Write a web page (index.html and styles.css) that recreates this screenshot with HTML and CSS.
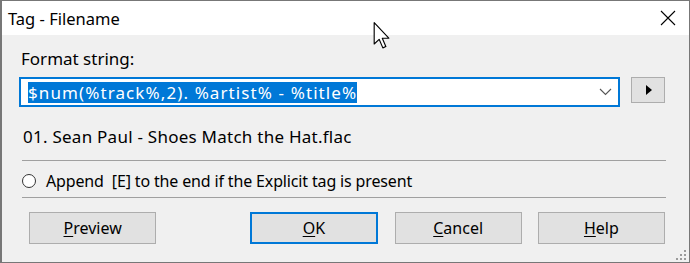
FILE: index.html
```html
<!DOCTYPE html>
<html>
<head>
<meta name="viewport" content="width=device-width, initial-scale=1">
<title>Tag - Filename</title>
<link rel="stylesheet" href="styles.css">
</head>
<body>

<div class="window">
  <div class="titlebar">
    <span class="title">Tag - Filename</span>
    <svg class="close" width="16" height="16" viewBox="0 0 16 16">
      <path d="M1 1 L15 15 M15 1 L1 15" stroke="#000" stroke-width="1.1" fill="none"/>
    </svg>
  </div>

  <div class="content">
    <div class="label">Format string:</div>

    <div class="combo-row">
      <div class="combo">
        <span class="selected">$num(%track%,2). %artist% - %title%</span>
        <svg class="chevron" width="13" height="8" viewBox="0 0 13 8">
          <path d="M1 1 L6.5 6.5 L12 1" stroke="#555" stroke-width="1.1" fill="none"/>
        </svg>
      </div>
      <button class="play">
        <svg width="8" height="10" viewBox="0 0 8 10"><path d="M1 0 L7 5 L1 10 Z" fill="#000"/></svg>
      </button>
    </div>

    <div class="preview">01. Sean Paul - Shoes Match the Hat.flac</div>

    <div class="sep"></div>

    <label class="radio-row">
      <span class="radio"></span>
      <span class="radio-text">Append  [E] to the end if the Explicit tag is present</span>
    </label>

    <div class="sep sep-low"></div>

    <div class="buttons">
      <button class="btn preview-btn"><u>P</u>review</button>
      <button class="btn default"><u>O</u>K</button>
      <button class="btn"><u>C</u>ancel</button>
      <button class="btn"><u>H</u>elp</button>
    </div>
  </div>

  <!-- resize grip -->
  <svg class="grip" width="10" height="10" viewBox="0 0 10 10" fill="#9a9a9a">
    <rect x="8" y="0" width="2" height="2"/>
    <rect x="4" y="4" width="2" height="2"/><rect x="8" y="4" width="2" height="2"/>
    <rect x="0" y="8" width="2" height="2"/><rect x="4" y="8" width="2" height="2"/><rect x="8" y="8" width="2" height="2"/>
  </svg>

  <!-- mouse pointer -->
  <svg class="cursor" width="18" height="27" viewBox="0 0 12 19">
    <path d="M0.5 0.5 L0.5 15.5 L4 12.2 L6.6 18.2 L8.7 17.3 L6.2 11.4 L10.8 11.4 Z" fill="#fff" stroke="#000" stroke-width="0.8" stroke-linejoin="round"/>
  </svg>
</div>

</body>
</html>
```

FILE: styles.css
```css
* {box-sizing: border-box}
body {
  margin: 0;
  font-family: "Noto Sans", "Open Sans", sans-serif;
  color: #000;
}
.window {
  position: relative;
  width: 690px;
  height: 263px;
  border: 1px solid #777;
  border-left-width: 2px;
  background-color: #f0f0f0;
  display: flex;
  flex-direction: column;
}
.titlebar {
  height: 34px;
  background-color: #fff;
  display: flex;
  align-items: center;
  padding: 0 13px 0 6px;
}
.title {
  font-size: 16.5px;
}
.close {
  margin-left: auto;
}
.content {
  padding: 0 24px 0 17px;
  display: flex;
  flex-direction: column;
  font-size: 17px;
}
.label {
  margin-top: 12px;
  height: 24px;
  line-height: 24px;
  padding-left: 2px;
}
.combo-row {
  margin-top: 6px;
  display: flex;
  align-items: flex-start;
}
.combo {
  width: 606px;
  height: 30px;
  border: 2px solid #0078d7;
  background-color: #fff;
  display: flex;
  align-items: center;
  padding-left: 7px;
}
.selected {
  background-color: #0078d7;
  color: #fff;
  height: 21px;
  line-height: 21px;
  white-space: pre;
  letter-spacing: 1.1px;
}
.chevron {
  margin-left: auto;
  margin-right: 6px;
}
.play {
  margin-left: 11px;
  width: 34px;
  height: 26px;
  border: 1px solid #adadad;
  background-color: #e1e1e1;
  display: flex;
  align-items: center;
  justify-content: center;
  padding: 0 0 0 1px;
}
.preview {
  margin-top: 18px;
  height: 24px;
  line-height: 24px;
  padding-left: 4px;
  letter-spacing: 0.25px;
}
.sep {
  margin: 11px 0 0 3px;
  width: 644px;
  height: 1px;
  background-color: #a0a0a0;
}
.sep-low {
  margin-top: 4px;
}
.radio-row {
  margin-top: 8px;
  height: 24px;
  display: flex;
  align-items: center;
  padding-left: 3px;
}
.radio {
  width: 14px;
  height: 14px;
  border: 1px solid #333;
  border-radius: 50%;
  background-color: #fff;
  margin-right: 10px;
}
.radio-text {
  white-space: pre;
  font-size: 16px;
  letter-spacing: -0.15px;
}
.buttons {
  margin-top: 14px;
  display: flex;
  gap: 16px;
  padding-left: 10px;
}
.btn {
  width: 128px;
  height: 32px;
  border: 1px solid #adadad;
  background-color: #e1e1e1;
  font-family: inherit;
  font-size: 16px;
  color: #000;
  padding: 0;
}
.btn u {
  text-underline-offset: 2px;
}
.preview-btn {
  margin-right: 78px;
}
.default {
  border: 2px solid #0078d7;
  margin-right: 1px;
}
.grip {
  position: absolute;
  right: 3px;
  bottom: 2px;
}
.cursor {
  position: absolute;
  left: 371px;
  top: 21px;
}
```
